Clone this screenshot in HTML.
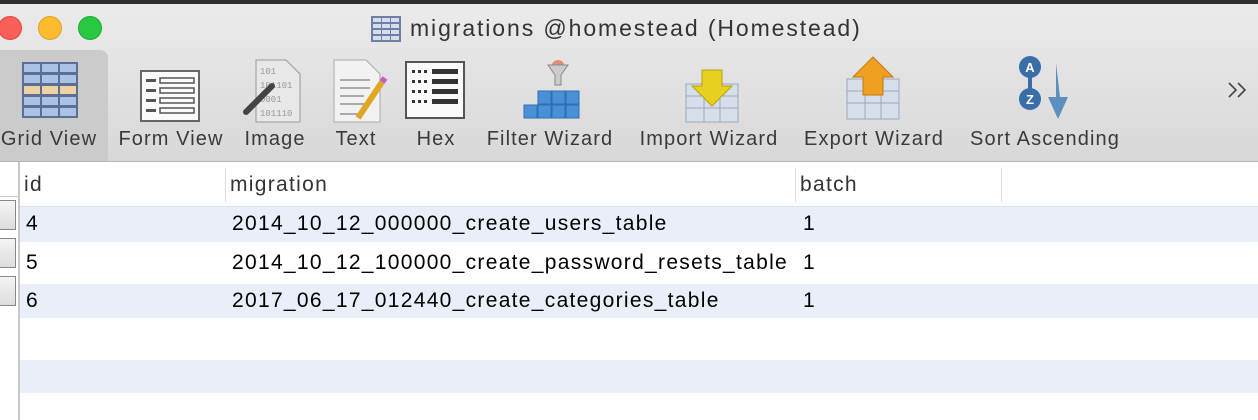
<!DOCTYPE html>
<html><head><meta charset="utf-8"><style>
*{margin:0;padding:0;box-sizing:border-box}
body{width:1258px;height:420px;overflow:hidden;background:#fff;font-family:"Liberation Sans",Helvetica,Arial,sans-serif;position:relative}
.abs{position:absolute}
.lbl{position:absolute;top:128px;font-size:20px;color:#3a3a3a;white-space:nowrap;transform:translateX(-50%);letter-spacing:1.1px}
.cell{position:absolute;font-size:21px;color:#000;white-space:nowrap;letter-spacing:1.3px}
.hd{position:absolute;font-size:21px;color:#333;top:173px;letter-spacing:1.3px}
</style></head><body>
<div class="abs" style="left:0;top:0;width:1258px;height:4px;background:#2e2e2e"></div>
<div class="abs" style="left:0;top:4px;width:1258px;height:157px;background:linear-gradient(#ebebeb,#d8d8d8)"></div>
<div class="abs" style="left:0;top:161px;width:1258px;height:1px;background:#b4b4b4"></div>
<div class="abs" style="left:-2px;top:16px;width:24px;height:24px;border-radius:50%;background:#fc5f57;border:1px solid #e0443e"></div>
<div class="abs" style="left:38px;top:16px;width:24px;height:24px;border-radius:50%;background:#fdbc2e;border:1px solid #dea123"></div>
<div class="abs" style="left:78px;top:16px;width:24px;height:24px;border-radius:50%;background:#28c840;border:1px solid #1aab29"></div>
<svg class="abs" style="left:371px;top:16px" width="30" height="26"><rect x="0" y="0" width="30" height="26" fill="#6b7fa8"/><g fill="#d8dde8"><rect x="2" y="2" width="8" height="4"/><rect x="11" y="2" width="8" height="4"/><rect x="20" y="2" width="8" height="4"/><rect x="2" y="8" width="8" height="4"/><rect x="11" y="8" width="8" height="4"/><rect x="20" y="8" width="8" height="4"/><rect x="2" y="14" width="8" height="4"/><rect x="11" y="14" width="8" height="4"/><rect x="20" y="14" width="8" height="4"/><rect x="2" y="20" width="8" height="4"/><rect x="11" y="20" width="8" height="4"/><rect x="20" y="20" width="8" height="4"/></g></svg>
<div class="abs" style="left:410px;top:15px;font-size:23px;color:#333;letter-spacing:1.9px">migrations @homestead (Homestead)</div>
<div class="abs" style="left:0;top:50px;width:108px;height:111px;background:#cbcbcb;border-radius:0 8px 0 0"></div>
<svg class="abs" style="left:20px;top:60px" width="60" height="64"><rect x="2" y="2" width="56" height="56" fill="#5b6e93"/><g fill="#a9c2e6"><rect x="4" y="4" width="16" height="8"/><rect x="22" y="4" width="16" height="8"/><rect x="40" y="4" width="16" height="8"/><rect x="4" y="15" width="16" height="8"/><rect x="22" y="15" width="16" height="8"/><rect x="40" y="15" width="16" height="8"/></g><g fill="#ecd3a0"><rect x="4" y="26" width="16" height="8"/><rect x="22" y="26" width="16" height="8"/><rect x="40" y="26" width="16" height="8"/></g><g fill="#a9c2e6"><rect x="4" y="37" width="16" height="8"/><rect x="22" y="37" width="16" height="8"/><rect x="40" y="37" width="16" height="8"/><rect x="4" y="48" width="16" height="8"/><rect x="22" y="48" width="16" height="8"/><rect x="40" y="48" width="16" height="8"/></g></svg>
<svg class="abs" style="left:140px;top:70px" width="62" height="54"><rect x="1" y="1" width="58" height="50" fill="#fafafa" stroke="#666" stroke-width="2"/><g fill="#555"><rect x="6" y="9" width="10" height="3"/><rect x="6" y="19" width="10" height="3"/><rect x="6" y="29" width="10" height="3"/><rect x="6" y="39" width="10" height="3"/></g><g fill="none" stroke="#555" stroke-width="1.5"><rect x="20" y="8" width="34" height="5"/><rect x="20" y="18" width="34" height="5"/><rect x="20" y="28" width="34" height="5"/><rect x="20" y="38" width="34" height="5"/></g></svg>
<svg class="abs" style="left:242px;top:58px" width="62" height="66"><path d="M14 2h30l14 14v48H14z" fill="#e8e8e8" stroke="#999"/><text x="18" y="16" font-size="9" fill="#999" font-family="Liberation Mono">101</text><text x="18" y="30" font-size="9" fill="#999" font-family="Liberation Mono">101101</text><text x="18" y="44" font-size="9" fill="#999" font-family="Liberation Mono">0001</text><text x="18" y="58" font-size="9" fill="#999" font-family="Liberation Mono">101110</text><path d="M4 54L30 28" stroke="#444" stroke-width="6" stroke-linecap="round"/></svg>
<svg class="abs" style="left:332px;top:58px" width="60" height="66"><path d="M2 2h32l14 14v48H2z" fill="#f2f2f2" stroke="#aaa"/><g stroke="#aaa" stroke-width="2"><path d="M8 22h30M8 30h30M8 38h24M8 46h30M8 56h20"/></g><path d="M26 60L50 24" stroke="#e0a820" stroke-width="6"/><path d="M50 24l3-4" stroke="#c060c0" stroke-width="6"/></svg>
<svg class="abs" style="left:404px;top:60px" width="62" height="62"><rect x="2" y="2" width="58" height="56" fill="#fafafa" stroke="#555" stroke-width="2"/><g fill="#333"><rect x="8" y="10" width="3" height="3"/><rect x="14" y="10" width="3" height="3"/><rect x="20" y="10" width="3" height="3"/><rect x="8" y="20" width="3" height="3"/><rect x="14" y="20" width="3" height="3"/><rect x="20" y="20" width="3" height="3"/><rect x="8" y="30" width="3" height="3"/><rect x="14" y="30" width="3" height="3"/><rect x="20" y="30" width="3" height="3"/><rect x="8" y="40" width="3" height="3"/><rect x="14" y="40" width="3" height="3"/><rect x="20" y="40" width="3" height="3"/><rect x="28" y="9" width="26" height="5"/><rect x="28" y="19" width="26" height="5"/><rect x="28" y="29" width="26" height="5"/><rect x="28" y="39" width="26" height="5"/></g></svg>
<svg class="abs" style="left:522px;top:55px" width="60" height="66"><ellipse cx="36" cy="10" rx="6" ry="5" fill="#e09070"/><path d="M26 10h20l-7 10v10h-6V20z" fill="#ccc" stroke="#888"/><g fill="#4a90d9" stroke="#2f6fb0"><rect x="16" y="36" width="13" height="13"/><rect x="30" y="36" width="13" height="13"/><rect x="44" y="36" width="13" height="13"/><rect x="2" y="50" width="13" height="13"/><rect x="16" y="50" width="13" height="13"/><rect x="30" y="50" width="13" height="13"/><rect x="44" y="50" width="13" height="13"/></g></svg>
<svg class="abs" style="left:682px;top:68px" width="60" height="56"><rect x="4" y="16" width="52" height="38" fill="#d6deea" stroke="#9aa8bd"/><g stroke="#9aa8bd"><path d="M4 28h52M4 40h52M22 16v38M38 16v38"/></g><path d="M20 2h20v16h10L30 38 10 18h10z" fill="#e8d020" stroke="#b8a010"/></svg>
<svg class="abs" style="left:842px;top:55px" width="62" height="68"><rect x="5" y="24" width="52" height="40" fill="#d6deea" stroke="#9aa8bd"/><g stroke="#9aa8bd"><path d="M5 36h52M5 48h52M23 24v40M39 24v40"/></g><path d="M31 2l20 20H41v18H21V22H11z" fill="#f0a020" stroke="#c07810"/></svg>
<svg class="abs" style="left:1004px;top:55px" width="74" height="68"><circle cx="26" cy="12" r="11" fill="#3a6ea8"/><text x="26" y="17" font-size="13" font-weight="bold" fill="#fff" text-anchor="middle">A</text><rect x="24" y="22" width="4" height="12" fill="#3a6ea8"/><circle cx="26" cy="44" r="11" fill="#3a6ea8"/><text x="26" y="49" font-size="13" font-weight="bold" fill="#fff" text-anchor="middle">Z</text><path d="M52 8l4 34h8L54 64 44 42h8z" fill="#5a8fbf"/></svg>
<svg class="abs" style="left:1226px;top:80px" width="24" height="20"><path d="M3 3l7 7-7 7M12 3l7 7-7 7" fill="none" stroke="#444" stroke-width="1.6"/></svg>
<div class="lbl" style="left:49px">Grid View</div>
<div class="lbl" style="left:171px">Form View</div>
<div class="lbl" style="left:275px">Image</div>
<div class="lbl" style="left:356px">Text</div>
<div class="lbl" style="left:436px">Hex</div>
<div class="lbl" style="left:550px">Filter Wizard</div>
<div class="lbl" style="left:709px">Import Wizard</div>
<div class="lbl" style="left:874px">Export Wizard</div>
<div class="lbl" style="left:1045px">Sort Ascending</div>
<div class="abs" style="left:18px;top:162px;width:2px;height:258px;background:#c8c8c8"></div>
<div class="abs" style="left:0;top:196px;width:18px;height:1px;background:#ccc"></div>
<div class="abs" style="left:225px;top:168px;width:1px;height:34px;background:#ddd"></div>
<div class="abs" style="left:795px;top:168px;width:1px;height:34px;background:#ddd"></div>
<div class="abs" style="left:1001px;top:168px;width:1px;height:34px;background:#ddd"></div>
<div class="abs" style="left:20px;top:206px;width:1238px;height:1px;background:#dde2ea"></div>
<div class="abs" style="left:20px;top:207px;width:1238px;height:35px;background:#e9eef8"></div>
<div class="abs" style="left:20px;top:284px;width:1238px;height:34px;background:#e9eef8"></div>
<div class="abs" style="left:20px;top:360px;width:1238px;height:33px;background:#e9eef8"></div>
<div class="abs" style="left:0;top:200px;width:16px;height:30px;background:linear-gradient(#f4f4f4,#ddd);border:1px solid #888;border-left:none"></div>
<div class="abs" style="left:0;top:238px;width:16px;height:30px;background:linear-gradient(#f4f4f4,#ddd);border:1px solid #888;border-left:none"></div>
<div class="abs" style="left:0;top:276px;width:16px;height:30px;background:linear-gradient(#f4f4f4,#ddd);border:1px solid #888;border-left:none"></div>
<div class="hd" style="left:24px">id</div>
<div class="hd" style="left:230px">migration</div>
<div class="hd" style="left:800px">batch</div>
<div class="cell" style="left:26px;top:212px">4</div>
<div class="cell" style="left:232px;top:212px">2014_10_12_000000_create_users_table</div>
<div class="cell" style="left:803px;top:212px">1</div>
<div class="cell" style="left:26px;top:251px">5</div>
<div class="cell" style="left:232px;top:251px">2014_10_12_100000_create_password_resets_table</div>
<div class="cell" style="left:803px;top:251px">1</div>
<div class="cell" style="left:26px;top:289px">6</div>
<div class="cell" style="left:232px;top:289px">2017_06_17_012440_create_categories_table</div>
<div class="cell" style="left:803px;top:289px">1</div>
</body></html>
